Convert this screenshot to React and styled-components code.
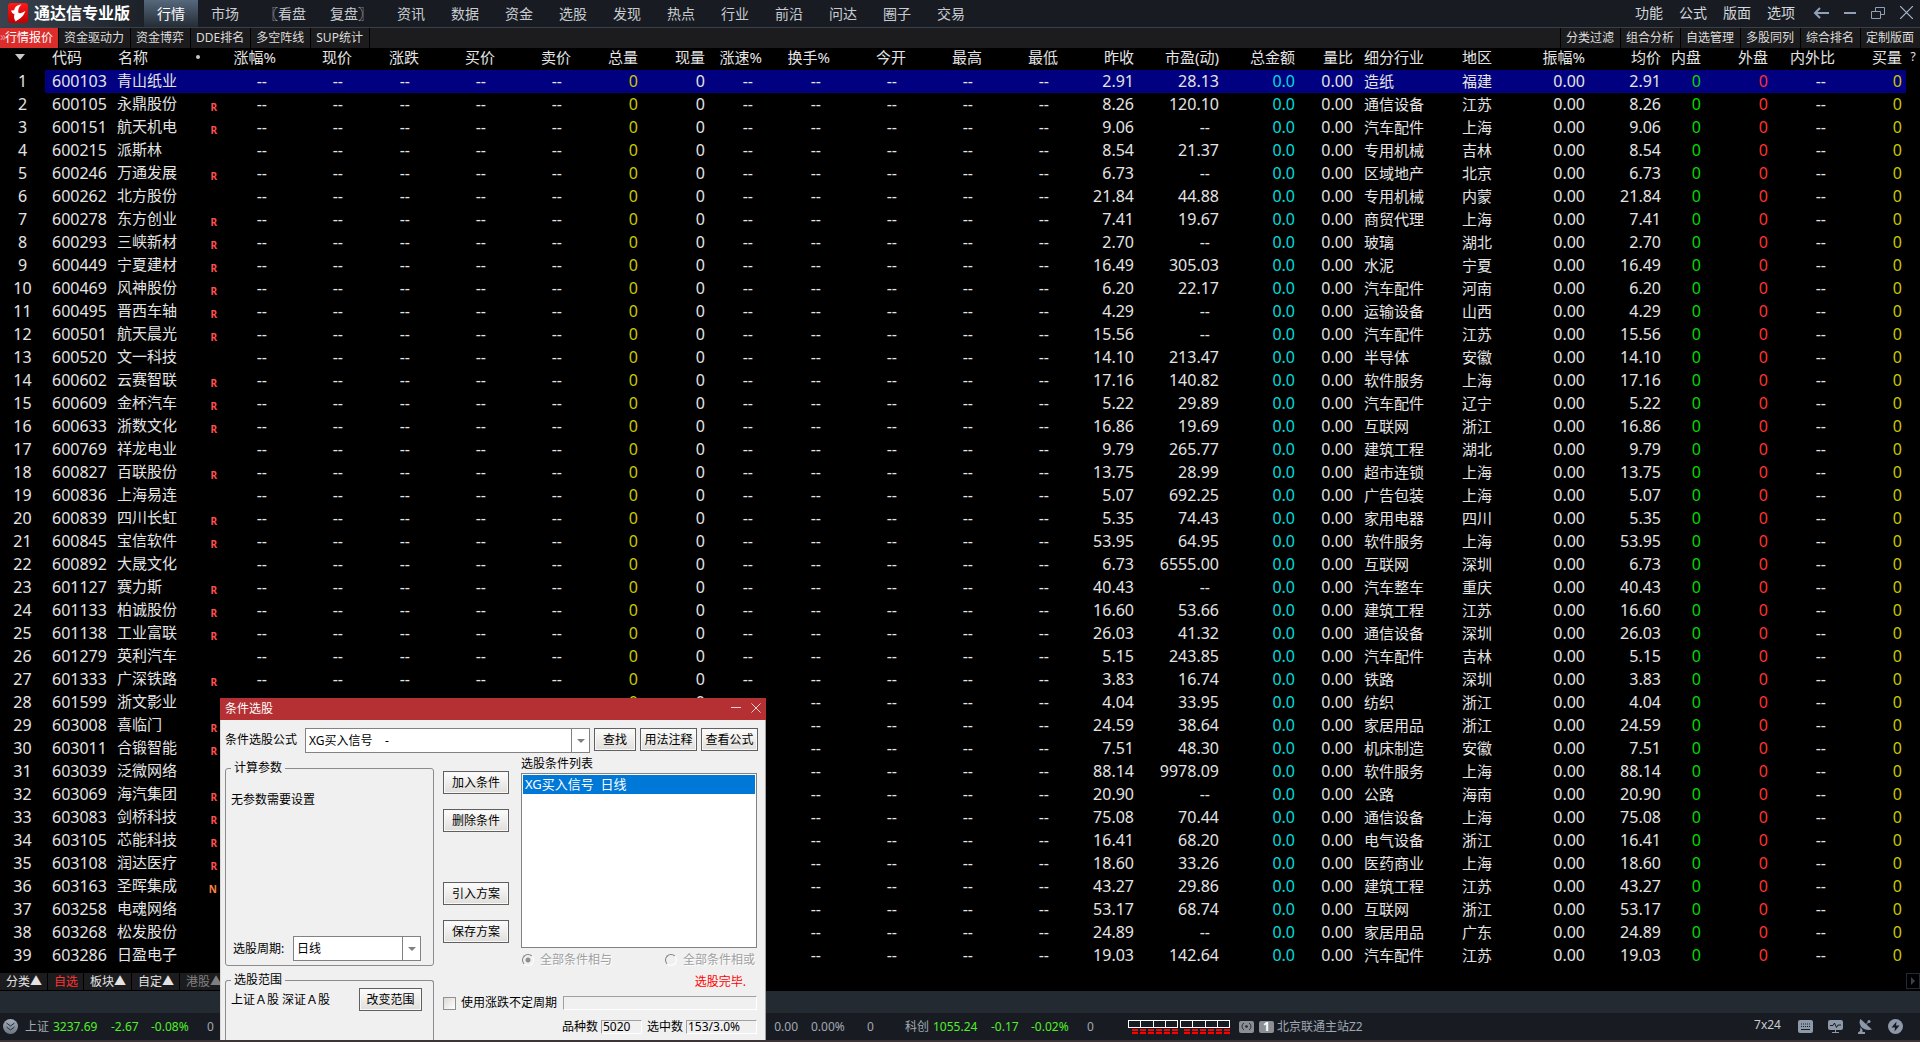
import React from "react";
import styled, { createGlobalStyle } from "styled-components";

const menus = [
  "行情", "市场", "〖看盘", "复盘〗", "资讯", "数据", "资金", "选股",
  "发现", "热点", "行业", "前沿", "问达", "圈子", "交易",
];
const tools = ["功能", "公式", "版面", "选项"];
const subTabs = ["行情报价", "资金驱动力", "资金博弈", "DDE排名", "多空阵线", "SUP统计"];
const subTools = ["分类过滤", "组合分析", "自选管理", "多股同列", "综合排名", "定制版面"];
const bottomTabs = ["分类▲", "自选", "板块▲", "自定▲", "港股▲"];

// value: fixed content for every row, field: index into the stock tuple
const columns = [
  { title: "涨幅%", width: 54, value: "--" },
  { title: "现价", width: 76, value: "--" },
  { title: "涨跌", width: 67, value: "--" },
  { title: "买价", width: 76, value: "--" },
  { title: "卖价", width: 76, value: "--" },
  { title: "总量", width: 67, value: "0", color: "#c8c800" },
  { title: "现量", width: 67, value: "0" },
  { title: "涨速%", width: 57, value: "--" },
  { title: "换手%", width: 68, value: "--" },
  { title: "今开", width: 76, value: "--" },
  { title: "最高", width: 76, value: "--" },
  { title: "最低", width: 76, value: "--" },
  { title: "昨收", width: 76, field: 3 },
  { title: "市盈(动)", width: 85, field: 4 },
  { title: "总金额", width: 76, value: "0.0", color: "#00dcdc" },
  { title: "量比", width: 58, value: "0.00" },
  { title: "细分行业", width: 98, field: 5, left: true },
  { title: "地区", width: 58, field: 6, left: true },
  { title: "振幅%", width: 76, value: "0.00" },
  { title: "均价", width: 76, field: 3 },
  { title: "内盘", width: 40, value: "0", color: "#00dc00" },
  { title: "外盘", width: 67, value: "0", color: "#ff3232" },
  { title: "内外比", width: 67, value: "--" },
  { title: "买量", width: 71, value: "0", color: "#c8c800", last: true },
];

const stocks = [
  ["600103", "青山纸业", "", "2.91", "28.13", "造纸", "福建"],
  ["600105", "永鼎股份", "R", "8.26", "120.10", "通信设备", "江苏"],
  ["600151", "航天机电", "R", "9.06", "--", "汽车配件", "上海"],
  ["600215", "派斯林", "", "8.54", "21.37", "专用机械", "吉林"],
  ["600246", "万通发展", "R", "6.73", "--", "区域地产", "北京"],
  ["600262", "北方股份", "", "21.84", "44.88", "专用机械", "内蒙"],
  ["600278", "东方创业", "R", "7.41", "19.67", "商贸代理", "上海"],
  ["600293", "三峡新材", "R", "2.70", "--", "玻璃", "湖北"],
  ["600449", "宁夏建材", "R", "16.49", "305.03", "水泥", "宁夏"],
  ["600469", "风神股份", "R", "6.20", "22.17", "汽车配件", "河南"],
  ["600495", "晋西车轴", "R", "4.29", "--", "运输设备", "山西"],
  ["600501", "航天晨光", "R", "15.56", "--", "汽车配件", "江苏"],
  ["600520", "文一科技", "", "14.10", "213.47", "半导体", "安徽"],
  ["600602", "云赛智联", "R", "17.16", "140.82", "软件服务", "上海"],
  ["600609", "金杯汽车", "R", "5.22", "29.89", "汽车配件", "辽宁"],
  ["600633", "浙数文化", "R", "16.86", "19.69", "互联网", "浙江"],
  ["600769", "祥龙电业", "", "9.79", "265.77", "建筑工程", "湖北"],
  ["600827", "百联股份", "R", "13.75", "28.99", "超市连锁", "上海"],
  ["600836", "上海易连", "", "5.07", "692.25", "广告包装", "上海"],
  ["600839", "四川长虹", "R", "5.35", "74.43", "家用电器", "四川"],
  ["600845", "宝信软件", "R", "53.95", "64.95", "软件服务", "上海"],
  ["600892", "大晟文化", "", "6.73", "6555.00", "互联网", "深圳"],
  ["601127", "赛力斯", "R", "40.43", "--", "汽车整车", "重庆"],
  ["601133", "柏诚股份", "R", "16.60", "53.66", "建筑工程", "江苏"],
  ["601138", "工业富联", "R", "26.03", "41.32", "通信设备", "深圳"],
  ["601279", "英利汽车", "", "5.15", "243.85", "汽车配件", "吉林"],
  ["601333", "广深铁路", "R", "3.83", "16.74", "铁路", "深圳"],
  ["601599", "浙文影业", "", "4.04", "33.95", "纺织", "浙江"],
  ["603008", "喜临门", "R", "24.59", "38.64", "家居用品", "浙江"],
  ["603011", "合锻智能", "R", "7.51", "48.30", "机床制造", "安徽"],
  ["603039", "泛微网络", "", "88.14", "9978.09", "软件服务", "上海"],
  ["603069", "海汽集团", "R", "20.90", "--", "公路", "海南"],
  ["603083", "剑桥科技", "R", "75.08", "70.44", "通信设备", "上海"],
  ["603105", "芯能科技", "R", "16.41", "68.20", "电气设备", "浙江"],
  ["603108", "润达医疗", "R", "18.60", "33.26", "医药商业", "上海"],
  ["603163", "圣晖集成", "N", "43.27", "29.86", "建筑工程", "江苏"],
  ["603258", "电魂网络", "", "53.17", "68.74", "互联网", "浙江"],
  ["603268", "松发股份", "", "24.89", "--", "家居用品", "广东"],
  ["603286", "日盈电子", "", "19.03", "142.64", "汽车配件", "江苏"],
];

const indexes = [
  ["上证", "3237.69", "-2.67", "-0.08%", "0"],
  ["", "", "", "", ""],
  ["", "", "", "", ""],
  ["", "", "0.00", "0.00%", "0"],
  ["科创", "1055.24", "-0.17", "-0.02%", "0"],
];

const Logo = () => (
  <svg width="20" height="20" viewBox="0 0 20 20">
    <defs>
      <linearGradient id="logoRed" x1="0" y1="0" x2="0" y2="1">
        <stop offset="0" stopColor="#ff1a1a" />
        <stop offset="1" stopColor="#c00000" />
      </linearGradient>
    </defs>
    <rect width="20" height="20" rx="3" fill="url(#logoRed)" />
    <path
      d="M13.5 1.500C8.500 2 6.500 4.500 6.300 7.300L3 7.500C3.500 9.500 4.800 10.800 6.500 11.300C5.600 13.500 6 16.500 7.800 18.500C9.500 16.500 15 15.500 17.500 7.800C15 9.800 12.500 10.500 10.500 10C9.800 7.500 10.500 4 13.500 1.500Z"
      fill="#fff"
    />
  </svg>
);

const Meter = () => (
  <svg width="50" height="14" viewBox="0 0 50 14" shapeRendering="crispEdges">
    <path d="M.5 .5H49.500V7.500H.5ZM12.500 .5V7.500M25.500 .5V7.500M37.500 .5V7.500" fill="none" stroke="#fff" />
    {[4, 12, 20, 28, 36, 44].map((x) => (
      <g key={x} fill="#f00">
        <rect x={x} y="9" width="6" height="2" />
        <rect x={x} y="12" width="6" height="2" />
      </g>
    ))}
  </svg>
);

const App = () => {
  return (
    <React.Fragment>
      <GlobalStyle />
      <Page>
        <TopBar>
          <Brand>
            <Logo />
            <BrandName>通达信专业版</BrandName>
          </Brand>
          <Menu>
            {menus.map((name, i) => (
              <MenuItem key={name} $active={i === 0} $wide={name.length > 2}>
                {name}
              </MenuItem>
            ))}
          </Menu>
          <Tools>
            {tools.map((name) => (
              <ToolItem key={name}>{name}</ToolItem>
            ))}
          </Tools>
          <WindowButtons>
            <IconButton aria-label="返回">
              <svg width="16" height="12" viewBox="0 0 16 12">
                <path d="M7 1L2 6L7 11M2 6H16" fill="none" stroke="#8fa0b8" strokeWidth="2" />
              </svg>
            </IconButton>
            <IconButton aria-label="最小化">
              <svg width="12" height="12" viewBox="0 0 12 12">
                <path d="M0 6H12" stroke="#8fa0b8" strokeWidth="2" />
              </svg>
            </IconButton>
            <IconButton aria-label="还原">
              <svg width="14" height="12" viewBox="0 0 14 12">
                <path
                  d="M4.500 4V.5H13.500V7.500H10M.5 4.500H9.500V11.500H.5Z"
                  fill="none"
                  stroke="#8fa0b8"
                />
              </svg>
            </IconButton>
            <IconButton aria-label="关闭">
              <svg width="13" height="13" viewBox="0 0 13 13">
                <path d="M0 0L13 13M13 0L0 13" stroke="#a9b8cc" strokeWidth="1.2" />
              </svg>
            </IconButton>
          </WindowButtons>
        </TopBar>

        <SubBar>
          {subTabs.map((name, i) => (
            <SubTab key={name} $active={i === 0}>
              {i === 0 && <More>»</More>}
              {name}
            </SubTab>
          ))}
          <Spacer />
          {subTools.map((name) => (
            <SubTool key={name}>{name}</SubTool>
          ))}
        </SubBar>

        <TableArea>
          <Table>
            <colgroup>
              <col style={{ width: 45 }} />
              <col style={{ width: 64 }} />
              <col style={{ width: 81 }} />
              <col style={{ width: 32 }} />
              {columns.map((c) => (
                <col key={c.title} style={{ width: c.width }} />
              ))}
              <col style={{ width: 14 }} />
            </colgroup>
            <thead>
              <tr>
                <SortHead>
                  <svg width="10" height="6" viewBox="0 0 10 6">
                    <path d="M0 0H10L5 6Z" fill="#c8c8c8" />
                  </svg>
                </SortHead>
                <CodeHead>代码</CodeHead>
                <NameHead>名称</NameHead>
                <DotHead>
                  <svg width="4" height="4" viewBox="0 0 4 4">
                    <circle cx="2" cy="2" r="2" fill="#c8c8c8" />
                  </svg>
                </DotHead>
                {columns.map((c) => (
                  <Head key={c.title} $left={c.left} $last={c.last}>
                    {c.title}
                  </Head>
                ))}
                <HelpHead>?</HelpHead>
              </tr>
            </thead>
            <tbody>
              {stocks.map((s, i) => (
                <Row key={s[0]} $selected={i === 0}>
                  <NumCell>{i + 1}</NumCell>
                  <CodeCell>{s[0]}</CodeCell>
                  <NameCell>{s[1]}</NameCell>
                  <FlagCell $flag={s[2]}>{s[2]}</FlagCell>
                  {columns.map((c) => {
                    const text = c.field ? s[c.field] : c.value;
                    return (
                      <Cell
                        key={c.title}
                        $left={c.left}
                        $last={c.last}
                        $color={c.color}
                        $empty={text === "--"}
                      >
                        {text}
                      </Cell>
                    );
                  })}
                  <td />
                </Row>
              ))}
            </tbody>
          </Table>
        </TableArea>

        <BottomBar>
          {bottomTabs.map((name, i) => (
            <BottomTab key={name} $active={i === 1} $dim={i === 4}>
              {name}
            </BottomTab>
          ))}
          <Spacer />
          <ScrollButton aria-label="向右">
            <svg width="4" height="8" viewBox="0 0 4 8">
              <path d="M0 0L4 4L0 8Z" fill="#39424d" />
            </svg>
          </ScrollButton>
        </BottomBar>
        <InfoBar />

        <StatusBar>
          <ExpandButton aria-label="展开">
            <svg width="9" height="9" viewBox="0 0 9 9">
              <path d="M.5 1L4.500 4L8.500 1M.5 5L4.500 8L8.500 5" fill="none" stroke="#28303a" />
            </svg>
          </ExpandButton>
          {indexes.map((q, i) => (
            <Quote key={i}>
              <span>{q[0]}</span>
              <Price>{q[1]}</Price>
              <Change $down={q[2].startsWith("-")}>{q[2]}</Change>
              <Percent $down={q[3].startsWith("-")}>{q[3]}</Percent>
              <span>{q[4]}</span>
            </Quote>
          ))}
          <Meters>
            <Meter />
            <Meter />
          </Meters>
          <Badge>
            <svg width="11" height="9" viewBox="0 0 11 9">
              <circle cx="5.5" cy="4.5" r="1.3" fill="#222" />
              <path d="M3 1C.5 2.500 .5 6.500 3 8M8 1C10.500 2.500 10.500 6.500 8 8" fill="none" stroke="#222" />
            </svg>
          </Badge>
          <Badge>1</Badge>
          <Station>北京联通主站Z2</Station>
          <Spacer />
          <Hours>7x24</Hours>
          <StatusIcons>
            <svg width="15" height="13" viewBox="0 0 15 13">
              <rect width="15" height="13" rx="2" fill="#8d99a8" />
              <path d="M3 4H12.500M3 6.500H12.500" stroke="#181c22" strokeDasharray="1 1" />
              <path d="M3 9.500H12" stroke="#181c22" />
            </svg>
            <svg width="15" height="13" viewBox="0 0 15 13">
              <rect width="15" height="10" rx="2" fill="#8d99a8" />
              <path d="M2 5.500H5L6.500 3L8.500 7.500L10 5H13" fill="none" stroke="#181c22" />
              <path d="M4 12.500H11M7.500 10V12" stroke="#8d99a8" />
            </svg>
            <svg width="15" height="15" viewBox="0 0 15 15">
              <path d="M2.500 0C-.5 5 4.500 13 14 10.500Z" fill="#8d99a8" />
              <path d="M2.500 8L4.500 11V13H7V15H0V13.500L2 12Z" fill="#8d99a8" />
              <path d="M7.500 6L11 2.500" stroke="#8d99a8" />
              <circle cx="11" cy="2.500" r="1.500" fill="#8d99a8" />
            </svg>
            <svg width="15" height="15" viewBox="0 0 15 15">
              <circle cx="7.500" cy="7.500" r="7.500" fill="#8d99a8" />
              <path d="M8.500 2.500L3.500 8.500H7L6.500 12.500L11.500 6.500H8Z" fill="#181c22" />
            </svg>
          </StatusIcons>
        </StatusBar>
        <Edge />

        <Dialog role="dialog" aria-labelledby="dialogTitle">
          <DialogTitle>
            <span id="dialogTitle">条件选股</span>
            <DialogButtons>
              <IconButton aria-label="最小化窗口">
                <svg width="10" height="10" viewBox="0 0 10 10">
                  <path d="M0 4.500H10" stroke="#f0d0d0" />
                </svg>
              </IconButton>
              <IconButton aria-label="关闭窗口">
                <svg width="10" height="10" viewBox="0 0 10 10">
                  <path d="M.5 .5L9.500 9.500M9.500 .5L.5 9.500" stroke="#f0d0d0" />
                </svg>
              </IconButton>
            </DialogButtons>
          </DialogTitle>
          <DialogBody>
            <FormulaRow>
              <FormulaLabel htmlFor="formula">条件选股公式</FormulaLabel>
              <SelectBox $grow>
                <Select id="formula">
                  <option>{"XG买入信号\u00a0\u00a0\u00a0\u00a0-"}</option>
                </Select>
                <Caret />
              </SelectBox>
              <FormulaButtons>
                <Button $size="small">查找</Button>
                <Button $size="tight">用法注释</Button>
                <Button $size="tight">查看公式</Button>
              </FormulaButtons>
            </FormulaRow>
            <DialogMain>
              <LeftColumn>
                <Group>
                  <Legend>计算参数</Legend>
                  <GroupText>无参数需要设置</GroupText>
                  <PeriodRow>
                    <label htmlFor="period">选股周期:</label>
                    <SelectBox>
                      <Select id="period">
                        <option>日线</option>
                      </Select>
                      <Caret />
                    </SelectBox>
                  </PeriodRow>
                </Group>
                <Group $open>
                  <Legend>选股范围</Legend>
                  <RangeRow>
                    <RangeText>上证Ａ股 深证Ａ股</RangeText>
                    <Button>改变范围</Button>
                  </RangeRow>
                </Group>
              </LeftColumn>
              <RightColumn>
                <ListRow>
                  <ActionColumn>
                    <Button $size="wide">加入条件</Button>
                    <Button $size="wide">删除条件</Button>
                    <ActionGap />
                    <Button $size="wide">引入方案</Button>
                    <Button $size="wide">保存方案</Button>
                  </ActionColumn>
                  <ListColumn>
                    <span id="listTitle">选股条件列表</span>
                    <List role="listbox" aria-labelledby="listTitle">
                      <ListItem role="option" aria-selected="true">
                        {"XG买入信号\u00a0\u00a0日线"}
                      </ListItem>
                    </List>
                    <RadioRow>
                      <RadioLabel>
                        <Radio name="mode" disabled defaultChecked />
                        全部条件相与
                      </RadioLabel>
                      <RadioLabel>
                        <Radio name="mode" disabled />
                        全部条件相或
                      </RadioLabel>
                    </RadioRow>
                    <Done>选股完毕.</Done>
                  </ListColumn>
                </ListRow>
                <CheckRow>
                  <CheckLabel>
                    <CheckBox />
                    使用涨跌不定周期
                  </CheckLabel>
                  <Sunken $grow />
                </CheckRow>
                <CountRow>
                  <span>品种数</span>
                  <Sunken $width="41px">5020</Sunken>
                  <CountLabel>选中数</CountLabel>
                  <Sunken $width="71px">153/3.0%</Sunken>
                </CountRow>
              </RightColumn>
            </DialogMain>
          </DialogBody>
        </Dialog>
      </Page>
    </React.Fragment>
  );
};

const GlobalStyle = createGlobalStyle`
  * {
    box-sizing: border-box;
  }
  body {
    margin: 0;
    background: #000;
    color: #e4e4e4;
    font-family: "Noto Sans", "Noto Sans CJK SC", sans-serif;
    font-size: 12px;
    line-height: 16px;
  }
  button, select, input {
    font: inherit;
    color: inherit;
    margin: 0;
  }
`;

const Page = styled.div`
  position: relative;
  min-height: 100vh;
  display: flex;
  flex-direction: column;
  overflow: hidden;
  white-space: nowrap;
`;

const TopBar = styled.header`
  height: 28px;
  display: flex;
  align-items: stretch;
  background: #181c22;
  border-bottom: 1px solid #37414c;
`;

const Brand = styled.div`
  width: 144px;
  padding: 0 0 2px 8px;
  display: flex;
  align-items: center;
  gap: 6px;
  background: linear-gradient(90deg, #3a434f, #1c2128);
`;

const BrandName = styled.strong`
  font-size: 16px;
  line-height: 20px;
  color: #fff;
`;

const Menu = styled.nav`
  display: flex;
`;

const PlainButton = styled.button`
  border: 0;
  padding: 0;
  background: none;
  white-space: nowrap;
`;

const MenuItem = styled(PlainButton)`
  padding: 0 ${(props) => (props.$wide ? "12px" : "13px")};
  font-size: 14px;
  line-height: 24px;
  color: ${(props) => (props.$active ? "#fff" : "#c8ccd2")};
  background: ${(props) => (props.$active ? "linear-gradient(#56687c, #252c35)" : "none")};
`;

const Tools = styled.div`
  margin-left: auto;
  display: flex;
  gap: 16px;
  padding-bottom: 1px;
`;

const ToolItem = styled(PlainButton)`
  font-size: 14px;
  color: #d2d6dc;
`;

const WindowButtons = styled.div`
  display: flex;
  align-items: center;
  gap: 15px;
  padding: 0 7px 2px 18px;
`;

const IconButton = styled(PlainButton)`
  display: flex;
  align-items: center;
`;

const SubBar = styled.div`
  height: 20px;
  display: flex;
  background: #1c1c1e;
`;

const SubTab = styled(PlainButton)`
  position: relative;
  padding: 0 ${(props) => (props.$active ? "5px" : "6px")} 0 5px;
  line-height: 20px;
  color: ${(props) => (props.$active ? "#fff" : "#dcdcdc")};
  background: ${(props) => (props.$active ? "#dc2d2d" : "none")};
  border-right: 1px solid #000;
`;

const More = styled.span`
  position: absolute;
  left: 0;
  top: -1px;
  color: #f09090;
`;

const SubTool = styled(PlainButton)`
  padding: 0 6px 0 5px;
  line-height: 20px;
  color: #dcdcdc;
  border-left: 1px solid #000;
`;

const Spacer = styled.div`
  flex: 1;
`;

const TableArea = styled.main`
  flex: 1;
`;

const Table = styled.table`
  width: 100%;
  table-layout: fixed;
  border-collapse: collapse;
  line-height: 18px;
  td,
  th {
    padding: 0 0 2px;
    height: 23px;
    font-weight: 400;
  }
  th {
    height: 22px;
    padding-bottom: 4px;
    font-size: 15px;
  }
`;

const SortHead = styled.th`
  text-align: center;
  svg {
    display: block;
    margin: 0 auto 0 15px;
  }
`;

const CodeHead = styled.th`
  text-align: left;
  &&& {
    padding-left: 7px;
  }
`;

const NameHead = styled.th`
  text-align: left;
  &&& {
    padding-left: 9px;
  }
`;

const DotHead = styled.th`
  &&& {
    padding-left: 6px;
  }
  svg {
    display: block;
  }
`;

const Head = styled.th`
  text-align: ${(props) => (props.$left ? "left" : "right")};
  &&& {
    padding-left: ${(props) => (props.$left ? "11px" : 0)};
    padding-right: ${(props) => (props.$last ? "4px" : 0)};
  }
`;

const HelpHead = styled.th`
  text-align: center;
  &&& {
    font-size: 12px;
  }
`;

const Row = styled.tr`
  td:not(:first-child):not(:last-child) {
    background: ${(props) => (props.$selected ? "#000080" : "none")};
  }
`;

const NumCell = styled.td`
  font-size: 16px;
  text-align: center;
`;

const CodeCell = styled.td`
  font-size: 16px;
  &&& {
    padding-left: 7px;
  }
`;

const NameCell = styled.td`
  font-size: 15px;
  &&& {
    padding: 0 0 4px 8px;
  }
`;

const FlagCell = styled.td`
  text-align: right;
  font-size: 10px;
  color: ${(props) => (props.$flag === "N" ? "#ff8040" : "#ff5050")};
  &&& {
    padding: 4px 5px 0 0;
    font-weight: 700;
    line-height: 16px;
  }
`;

const Cell = styled.td`
  text-align: ${(props) => (props.$left ? "left" : "right")};
  font-size: ${(props) => (props.$left ? "15px" : "16px")};
  color: ${(props) => props.$color || "inherit"};
  &&& {
    padding-left: ${(props) => (props.$left ? "11px" : 0)};
    padding-right: ${(props) => (props.$empty ? "9px" : props.$last ? "4px" : 0)};
  }
`;

const BottomBar = styled.div`
  height: 18px;
  display: flex;
  align-items: stretch;
  background: #000;
`;

const BottomTab = styled(PlainButton)`
  padding: 0 5px 0 6px;
  line-height: 16px;
  background: #1c1c1e;
  border-right: 1px solid #000;
  border-bottom: 1px solid #000;
  color: ${(props) => (props.$active ? "#ff3232" : props.$dim ? "#808080" : "#e4e4e4")};
`;

const ScrollButton = styled(PlainButton)`
  width: 14px;
  height: 16px;
  display: flex;
  align-items: center;
  justify-content: center;
  border: 1px solid #242a31;
`;

const InfoBar = styled.div`
  height: 22px;
  background: #242a31;
`;

const StatusBar = styled.footer`
  height: 27px;
  display: flex;
  align-items: center;
  background: #181c22;
  color: #a0a8b4;
`;

const ExpandButton = styled(PlainButton)`
  width: 15px;
  height: 15px;
  margin: 0 7px 0 3px;
  display: flex;
  align-items: center;
  justify-content: center;
  border-radius: 50%;
  background: linear-gradient(#a4aebb, #6c7684);
`;

const Quote = styled.div`
  width: 220px;
  display: grid;
  grid-template-columns: 28px 58px 27px 69px 1fr;
  flex: none;
`;

const Price = styled.span`
  color: #50f028;
`;

const Change = styled.span`
  text-align: right;
  color: ${(props) => (props.$down ? "#50f028" : "inherit")};
`;

const Percent = styled.span`
  padding-left: 13px;
  color: ${(props) => (props.$down ? "#50f028" : "inherit")};
`;

const Meters = styled.div`
  display: flex;
  gap: 2px;
  margin: 0 9px 0 3px;
`;

const Badge = styled.span`
  width: 15px;
  height: 12px;
  margin-right: 5px;
  display: flex;
  align-items: center;
  justify-content: center;
  border-radius: 2px;
  background: #8a8f96;
  color: #fff;
  font-weight: 700;
  line-height: 12px;
`;

const Station = styled.span`
  margin-left: -2px;
`;

const Hours = styled.span`
  color: #c8ccd2;
  padding-bottom: 4px;
`;

const StatusIcons = styled.div`
  display: flex;
  align-items: center;
  gap: 15px;
  padding: 0 17px;
`;

const Edge = styled.div`
  height: 2px;
  background: #3c3436;
`;

const Dialog = styled.section`
  position: absolute;
  left: 220px;
  bottom: 2px;
  width: 546px;
  height: 342px;
  display: flex;
  flex-direction: column;
  overflow: hidden;
  background: #f0f0f0;
  color: #000;
`;

const DialogTitle = styled.div`
  height: 22px;
  padding: 0 5px;
  display: flex;
  align-items: center;
  justify-content: space-between;
  background: #b43032;
  color: #fff;
`;

const DialogButtons = styled.div`
  display: flex;
  gap: 10px;
  padding-bottom: 3px;
`;

const DialogBody = styled.div`
  flex: 1;
  display: flex;
  flex-direction: column;
  padding: 8px 7px 0 4px;
  border-left: 1px solid #d8d8d8;
  border-right: 1px solid #a0a0a0;
`;

const FormulaRow = styled.div`
  display: flex;
  align-items: flex-start;
`;

const FormulaLabel = styled.label`
  width: 80px;
  line-height: 24px;
`;

const SelectBox = styled.div`
  position: relative;
  height: 25px;
  width: ${(props) => (props.$grow ? "auto" : "128px")};
  flex: ${(props) => (props.$grow ? 1 : "none")};
`;

const Select = styled.select`
  appearance: none;
  width: 100%;
  height: 100%;
  padding: 0 20px 0 3px;
  border: 1px solid #828282;
  border-radius: 0;
  background: #fff;
`;

const Caret = styled.span`
  position: absolute;
  top: 1px;
  right: 1px;
  bottom: 1px;
  width: 18px;
  border-left: 1px solid #828282;
  pointer-events: none;
  &::after {
    content: "";
    position: absolute;
    left: 5px;
    top: 10px;
    border: 4px solid transparent;
    border-top-color: #808080;
    border-bottom: 0;
  }
`;

const FormulaButtons = styled.div`
  display: flex;
  gap: 4px;
  margin-left: 4px;
`;

const buttonWidths = { small: "42px", tight: "57px", wide: "66px" };

const Button = styled.button`
  width: ${(props) => buttonWidths[props.$size] || "63px"};
  height: 23px;
  padding: 0;
  border: 1px solid #606060;
  background: linear-gradient(#fdfdfd, #e0deda);
  box-shadow: inset 0 0 0 1px #f8f8f8;
  line-height: 20px;
  text-align: center;
`;

const DialogMain = styled.div`
  flex: 1;
  display: flex;
  gap: 9px;
  padding-right: 1px;
`;

const LeftColumn = styled.div`
  width: 209px;
  padding-top: 7px;
  display: flex;
  flex-direction: column;
  gap: 6px;
`;

const Group = styled.fieldset`
  min-width: 0;
  height: ${(props) => (props.$open ? "auto" : "206px")};
  flex: ${(props) => (props.$open ? 1 : "none")};
  margin: 0;
  padding: 0 5px;
  border: 1px solid #8c8c8c;
  border-bottom-width: ${(props) => (props.$open ? 0 : "1px")};
  border-radius: ${(props) => (props.$open ? "3px 3px 0 0" : "3px")};
`;

const Legend = styled.legend`
  padding: 0 3px;
`;

const GroupText = styled.div`
  height: 160px;
  padding-top: 16px;
`;

const PeriodRow = styled.div`
  padding: 0 7px 0 2px;
  display: flex;
  align-items: center;
  justify-content: space-between;
`;

const RangeRow = styled.div`
  display: flex;
  align-items: flex-start;
  justify-content: space-between;
  padding-right: 6px;
`;

const RangeText = styled.span`
  padding-top: 4px;
`;

const RightColumn = styled.div`
  flex: 1;
`;

const ListRow = styled.div`
  display: flex;
  gap: 12px;
`;

const ActionColumn = styled.div`
  width: 66px;
  padding-top: 18px;
  display: flex;
  flex-direction: column;
  gap: 15px;
`;

const ActionGap = styled.div`
  height: 20px;
`;

const ListColumn = styled.div`
  flex: 1;
  padding-top: 3px;
`;

const List = styled.ul`
  height: 175px;
  margin: 1px 0 4px;
  padding: 1px;
  list-style: none;
  border: 1px solid #828282;
  background: #fff;
`;

const ListItem = styled.li`
  padding-left: 2px;
  font-size: 13px;
  line-height: 19px;
  background: #0078d7;
  color: #fff;
`;

const RadioRow = styled.div`
  display: flex;
  justify-content: space-between;
  padding: 0 2px 0 1px;
`;

const RadioLabel = styled.label`
  display: flex;
  align-items: center;
  gap: 6px;
  color: #a0a0a0;
  text-shadow: 1px 1px #fff;
`;

const Radio = styled.input.attrs({ type: "radio" })`
  appearance: none;
  width: 12px;
  height: 12px;
  border: 1px solid;
  border-color: #808080 #fff #fff #808080;
  border-radius: 50%;
  background: #f0f0f0;
  &:checked {
    background: radial-gradient(circle, #909090 2px, #f0f0f0 3px);
  }
`;

const Done = styled.div`
  padding: 6px 11px 0 0;
  text-align: right;
  color: #f00;
`;

const CheckRow = styled.div`
  display: flex;
  align-items: center;
  gap: 6px;
  margin-top: 5px;
`;

const CheckLabel = styled.label`
  display: flex;
  align-items: center;
  gap: 5px;
`;

const CheckBox = styled.input.attrs({ type: "checkbox" })`
  appearance: none;
  width: 13px;
  height: 13px;
  border: 1px solid #909090;
  background: linear-gradient(135deg, #dcdad6, #fff);
`;

const Sunken = styled.span`
  width: ${(props) => props.$width || "auto"};
  flex: ${(props) => (props.$grow ? 1 : "none")};
  height: 14px;
  padding-left: 1px;
  line-height: 12px;
  border: 1px solid;
  border-color: #a0a0a0 #fff #fff #a0a0a0;
`;

const CountRow = styled.div`
  display: flex;
  align-items: center;
  justify-content: flex-end;
  gap: 3px;
  margin-top: 8px;
`;

const CountLabel = styled.span`
  margin-left: 2px;
`;

export default App;
